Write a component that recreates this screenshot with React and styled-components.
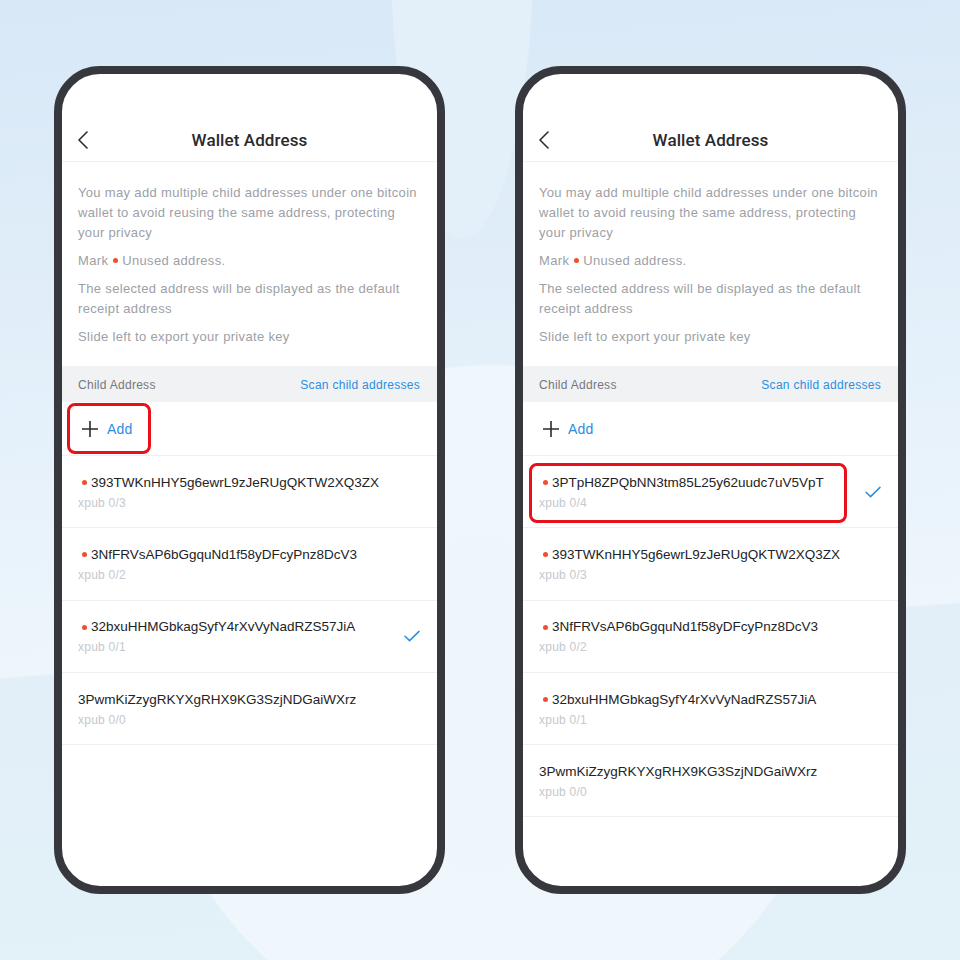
import React from 'react';
import styled, { createGlobalStyle } from 'styled-components';

const Global = createGlobalStyle`
  html, body { margin: 0; padding: 0; }
  body { font-family: "Liberation Sans", Arial, sans-serif; -webkit-font-smoothing: antialiased; }
  * { box-sizing: border-box; }
`;

const Page = styled.div`
  width: 960px;
  height: 960px;
  padding-top: 66px;
  display: flex;
  justify-content: center;
  align-items: flex-start;
  gap: 70px;
  overflow: hidden;
  background:
    radial-gradient(circle 341px at 493px 705px, #eef6fb 0, #f0f7fc 339px, rgba(240,247,252,0) 341px),
    radial-gradient(ellipse 72px 300px at 462px -60px, #e3f0fa 0, #e3f0fa 99%, rgba(227,240,250,0) 100%),
    linear-gradient(175.5deg, #d8e8f7 0%, #e4f0fa 40%, #eef6fc 65.4%, #e2eff9 65.6%, #e3f1f8 100%);
`;

const Phone = styled.div`
  width: 391px;
  height: 828px;
  border: 8px solid #37383d;
  border-radius: 46px;
  background: #fff;
  overflow: hidden;
  display: flex;
  flex-direction: column;
`;

const StatusBar = styled.div`
  height: 44px;
  flex: none;
`;

const NavBar = styled.div`
  height: 44px;
  flex: none;
  display: grid;
  grid-template-columns: 1fr auto 1fr;
  align-items: center;
  border-bottom: 1px solid #f0f1f3;
  padding: 1px 16px 0;
`;

const BackButton = styled.div`
  display: flex;
  align-items: center;
  height: 100%;
  padding-bottom: 1px;
`;

const Title = styled.div`
  font-family: Roboto, "Liberation Sans", Arial, sans-serif;
  font-size: 17px;
  font-weight: 500;
  color: #2a2a2d;
  letter-spacing: 0.1px;
`;

const Info = styled.div`
  padding: 21px 16px 19px;
  flex: none;
`;

const InfoText = styled.p`
  margin: 0 0 8px;
  font-size: 13px;
  line-height: 20px;
  color: #9da0a6;
  letter-spacing: 0.33px;
  &:last-child { margin-bottom: 0; }
`;

const InlineDot = styled.span`
  display: inline-block;
  width: 5px;
  height: 5px;
  border-radius: 50%;
  background: #ef4f2c;
  margin: 0 4px 0 5px;
  vertical-align: 2px;
`;

const SectionHeader = styled.div`
  height: 36px;
  flex: none;
  background: #f1f2f4;
  display: flex;
  align-items: center;
  justify-content: space-between;
  padding: 1px 17px 0 16px;
  font-size: 12px;
  letter-spacing: 0.28px;
`;

const SectionLabel = styled.span`
  color: #74777e;
`;

const SectionLink = styled.span`
  color: #2a8ee3;
`;

const AddRow = styled.div`
  position: relative;
  height: 54px;
  flex: none;
  display: flex;
  align-items: center;
  gap: 9px;
  padding-left: 20px;
  border-bottom: 1px solid #eff0f2;
`;

const AddLabel = styled.span`
  font-size: 14px;
  color: #2a8ee3;
  letter-spacing: 0.2px;
`;

const AddressRow = styled.div`
  position: relative;
  height: 72.3px;
  flex: none;
  display: flex;
  align-items: center;
  justify-content: space-between;
  padding: 2px 17px 0 16px;
  border-bottom: 1px solid #eff0f2;
`;

const AddressBody = styled.div`
  display: flex;
  flex-direction: column;
`;

const AddressLine = styled.div`
  display: flex;
  align-items: center;
  font-size: 13.5px;
  line-height: 20px;
  color: #222326;
  letter-spacing: 0;
`;

const Dot = styled.span`
  width: 5px;
  height: 5px;
  border-radius: 50%;
  background: #ef4f2c;
  margin: 0 4px 0 4px;
  flex: none;
`;

const Xpub = styled.div`
  font-size: 12px;
  line-height: 20px;
  color: #c6c8cc;
  letter-spacing: 0.25px;
`;

const CheckMark = styled.div`
  display: flex;
  margin-top: -2px;
`;

const Highlight = styled.div`
  position: absolute;
  left: ${(p) => p.$left}px;
  top: ${(p) => p.$top}px;
  width: ${(p) => p.$width}px;
  height: ${(p) => p.$height}px;
  border: 3px solid #e8101a;
  border-radius: 8px;
  pointer-events: none;
`;

const Chevron = () => (
  <svg width="11" height="18" viewBox="0 0 11 18" fill="none">
    <path d="M9 1 L1 9 L9 17" stroke="#2b2b2e" strokeWidth="1.6" strokeLinecap="round" strokeLinejoin="round" />
  </svg>
);

const Plus = () => (
  <svg width="16" height="16" viewBox="0 0 16 16" fill="none">
    <path d="M8 0.5 V15.5 M0.5 8 H15.5" stroke="#2b2b2e" strokeWidth="1.6" strokeLinecap="round" />
  </svg>
);

const Check = () => (
  <CheckMark>
    <svg width="16" height="12" viewBox="0 0 16 12" fill="none">
      <path d="M1 6.2 L5.6 10.6 L15 1.4" stroke="#2a8ee3" strokeWidth="1.5" strokeLinecap="round" strokeLinejoin="round" />
    </svg>
  </CheckMark>
);

const leftRows = [
  { addr: '393TWKnHHY5g6ewrL9zJeRUgQKTW2XQ3ZX', xpub: 'xpub 0/3', dot: true },
  { addr: '3NfFRVsAP6bGgquNd1f58yDFcyPnz8DcV3', xpub: 'xpub 0/2', dot: true },
  { addr: '32bxuHHMGbkagSyfY4rXvVyNadRZS57JiA', xpub: 'xpub 0/1', dot: true, checked: true },
  { addr: '3PwmKiZzygRKYXgRHX9KG3SzjNDGaiWXrz', xpub: 'xpub 0/0', dot: false },
];

const rightRows = [
  { addr: '3PTpH8ZPQbNN3tm85L25y62uudc7uV5VpT', xpub: 'xpub 0/4', dot: true, checked: true, highlight: true },
  { addr: '393TWKnHHY5g6ewrL9zJeRUgQKTW2XQ3ZX', xpub: 'xpub 0/3', dot: true },
  { addr: '3NfFRVsAP6bGgquNd1f58yDFcyPnz8DcV3', xpub: 'xpub 0/2', dot: true },
  { addr: '32bxuHHMGbkagSyfY4rXvVyNadRZS57JiA', xpub: 'xpub 0/1', dot: true },
  { addr: '3PwmKiZzygRKYXgRHX9KG3SzjNDGaiWXrz', xpub: 'xpub 0/0', dot: false },
];

function WalletScreen({ rows, highlightAdd }) {
  return (
    <Phone>
      <StatusBar />
      <NavBar>
        <BackButton><Chevron /></BackButton>
        <Title>Wallet Address</Title>
        <span />
      </NavBar>
      <Info>
        <InfoText>You may add multiple child addresses under one bitcoin wallet to avoid reusing the same address, protecting your privacy</InfoText>
        <InfoText>Mark<InlineDot />Unused address.</InfoText>
        <InfoText>The selected address will be displayed as the default receipt address</InfoText>
        <InfoText>Slide left to export your private key</InfoText>
      </Info>
      <SectionHeader>
        <SectionLabel>Child Address</SectionLabel>
        <SectionLink>Scan child addresses</SectionLink>
      </SectionHeader>
      <AddRow>
        <Plus />
        <AddLabel>Add</AddLabel>
        {highlightAdd && <Highlight $left={5} $top={1} $width={84} $height={51} />}
      </AddRow>
      {rows.map((r) => (
        <AddressRow key={r.addr + r.xpub}>
          <AddressBody>
            <AddressLine>
              {r.dot && <Dot />}
              {r.addr}
            </AddressLine>
            <Xpub>{r.xpub}</Xpub>
          </AddressBody>
          {r.checked && <Check />}
          {r.highlight && <Highlight $left={6} $top={7} $width={318} $height={60} />}
        </AddressRow>
      ))}
    </Phone>
  );
}

export default function App() {
  return (
    <>
      <Global />
      <Page>
        <WalletScreen rows={leftRows} highlightAdd />
        <WalletScreen rows={rightRows} />
      </Page>
    </>
  );
}
